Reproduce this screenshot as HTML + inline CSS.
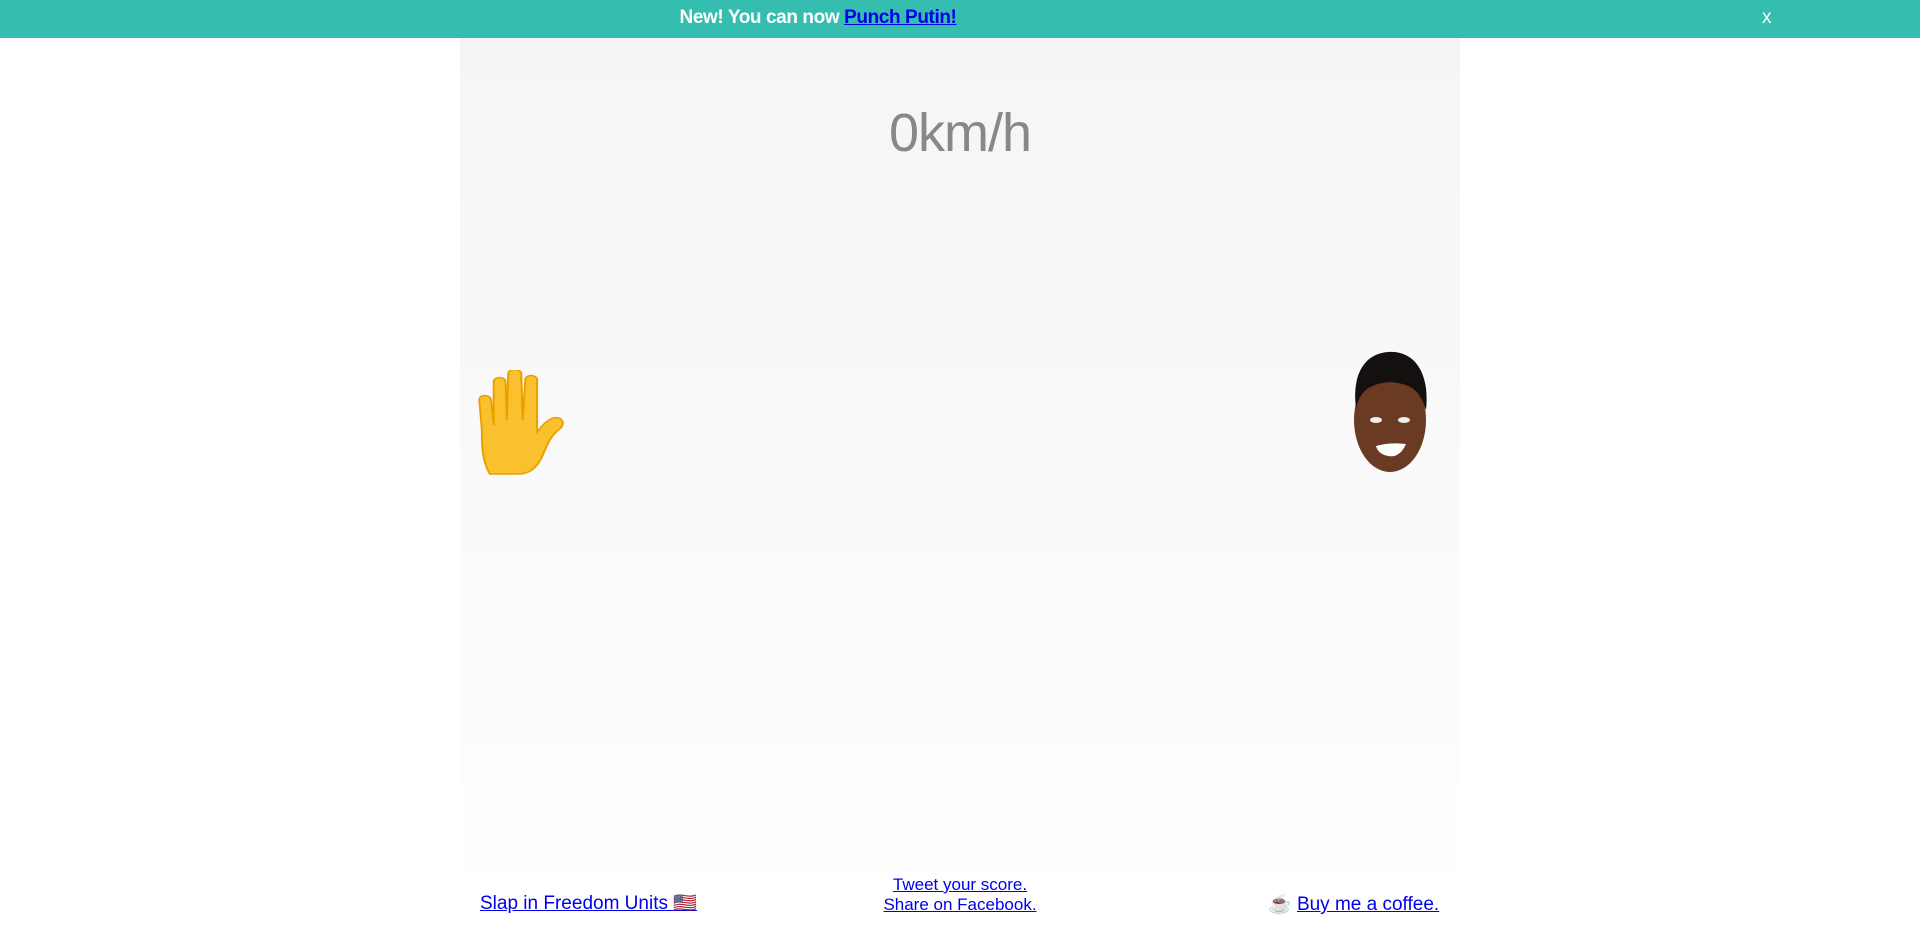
<!DOCTYPE html>
<html><head><meta charset="utf-8"><style>
html,body{margin:0;padding:0;width:1920px;height:932px;overflow:hidden;background:#fff;font-family:"Liberation Sans",sans-serif}
.bar{position:absolute;left:0;top:0;width:1920px;height:38px;background:#35bdb0;color:#fff;font-size:19px;font-weight:bold}
.bar .t{position:absolute;left:0;width:1636px;text-align:center;top:7px;letter-spacing:-0.4px}
.bar a{color:#0000ee}
.bar .x{position:absolute;left:1762px;top:7px;font-weight:normal;font-size:19px}
.panel{position:absolute;left:460px;top:38px;width:1000px;height:746px;background:linear-gradient(#f5f5f5,#fdfdfd)}
.panel2{position:absolute;left:460px;top:784px;width:1000px;height:92px;background:#fefefe}
.speed{position:absolute;left:460px;width:1000px;top:102px;text-align:center;font-size:54px;color:#888;font-weight:300;letter-spacing:-1px}
a{color:#0000ee}
.f{position:absolute;font-size:19px}
.c{position:absolute;left:760px;width:400px;text-align:center;font-size:17px}
</style></head><body>
<div class="bar"><div class="t">New! You can now <a href="#">Punch Putin!</a></div><div class="x">x</div></div>
<div class="panel"></div><div class="panel2"></div>
<div class="speed">0km/h</div>
<svg style="position:absolute;left:474px;top:370px" width="92" height="106" viewBox="0 0 70 106" preserveAspectRatio="none">
<path d="M12 104 C6 90 6 75 6 60 L4 30 C4 24 12 24 13 30 L15 55 L15 12 C15 6 24 6 24 12 L25 50 L26 4 C26 -2 36 -2 36 4 L37 50 L39 10 C39 4 48 4 48 10 L48 62 C52 55 56 50 60 48 C66 46 70 52 66 58 C58 66 56 74 52 86 C48 98 42 104 34 104 Z" fill="#fbc02d" stroke="#e8a000" stroke-width="1.5"/>
</svg>
<svg style="position:absolute;left:1348px;top:348px" width="86" height="128" viewBox="0 0 86 128">
<ellipse cx="42" cy="72" rx="36" ry="52" fill="#6b3a22"/>
<path d="M8 60 C4 30 14 6 40 4 C66 2 82 24 78 62 C72 44 66 36 42 34 C20 36 12 44 8 60 Z" fill="#151010"/>
<ellipse cx="28" cy="72" rx="6" ry="3" fill="#eee"/><ellipse cx="56" cy="72" rx="6" ry="3" fill="#eee"/>
<path d="M28 98 Q42 94 58 96 Q52 110 40 108 Q30 106 28 98Z" fill="#fff"/>
</svg>
<a class="f" href="#" style="left:480px;top:891px">Slap in Freedom Units 🇺🇸</a>
<div class="c" style="top:875px"><a href="#">Tweet your score.</a></div>
<div class="c" style="top:895px"><a href="#">Share on Facebook.</a></div>
<span class="f" style="left:1268px;top:892px">☕ <a href="#">Buy me a coffee.</a></span>
</body></html>
